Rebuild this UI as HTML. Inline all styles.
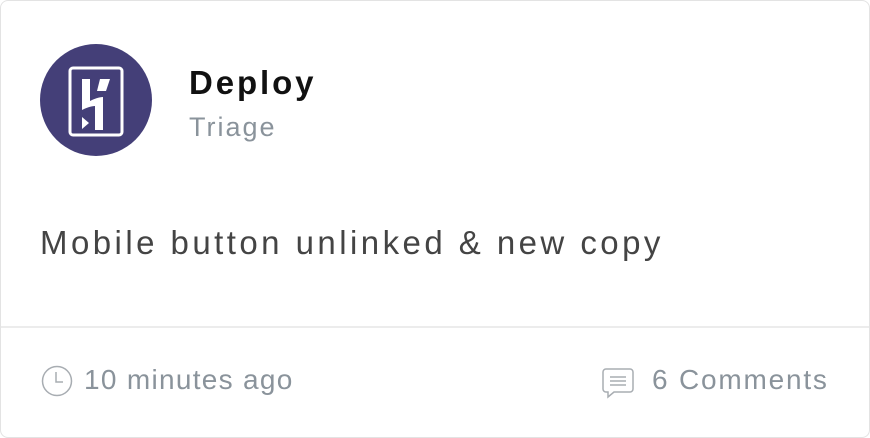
<!DOCTYPE html>
<html><head><style>
body{margin:0;width:870px;height:438px;background:#fff;font-family:"Liberation Sans",Arial,sans-serif;position:relative;overflow:hidden}
.card{position:absolute;left:0;top:0;width:868px;height:436px;border:1px solid #e3e3e3;border-radius:8px}
.div{position:absolute;left:1px;right:1px;top:326px;height:2px;background:#ececec}
.t{position:absolute;white-space:nowrap}
</style></head><body>
<div class="card"></div>
<div class="div"></div>
<svg style="position:absolute;left:40px;top:44px" width="112" height="112" viewBox="0 0 112 112">
<circle cx="56" cy="56" r="56" fill="#443f78"/>
<rect x="30" y="24" width="52" height="67" rx="3" fill="none" stroke="#fff" stroke-width="3"/>
<path d="M42 35h8v22c4-2 9-4 13-4v33h-8V62c-4 0-9 2-13 4z" fill="#fff"/>
<path d="M60 35h10l-4 12h-9z" fill="#fff"/>
<path d="M42 73l7 6-7 6z" fill="#fff"/>
</svg>
<div class="t" style="left:189px;top:64px;font-size:33px;font-weight:bold;color:#111;letter-spacing:2.9px">Deploy</div>
<div class="t" style="left:189px;top:112px;font-size:27px;color:#8a939b;letter-spacing:2px">Triage</div>
<div class="t" style="left:40px;top:224px;font-size:33px;color:#444;letter-spacing:3.45px">Mobile button unlinked &amp; new copy</div>
<svg style="position:absolute;left:41px;top:365px" width="32" height="32" viewBox="0 0 32 32">
<circle cx="16" cy="16" r="14.5" fill="none" stroke="#a8adb2" stroke-width="1.5"/>
<path d="M15 7v10h7" fill="none" stroke="#a8adb2" stroke-width="1.5"/>
</svg>
<div class="t" style="left:84px;top:364px;font-size:28px;color:#8a939b;letter-spacing:1.3px">10 minutes ago</div>
<svg style="position:absolute;left:602px;top:367px" width="34" height="32" viewBox="0 0 34 32">
<path d="M4 2h24a3 3 0 0 1 3 3v17a3 3 0 0 1-3 3H12l-6 5v-5H4a3 3 0 0 1-3-3V5a3 3 0 0 1 3-3z" fill="none" stroke="#a8adb2" stroke-width="1.5"/>
<path d="M8 10h16M8 14h16M8 18h16" stroke="#a8adb2" stroke-width="1.5"/>
</svg>
<div class="t" style="left:652px;top:364px;font-size:28px;color:#8a939b;letter-spacing:1.8px">6 Comments</div>
</body></html>
